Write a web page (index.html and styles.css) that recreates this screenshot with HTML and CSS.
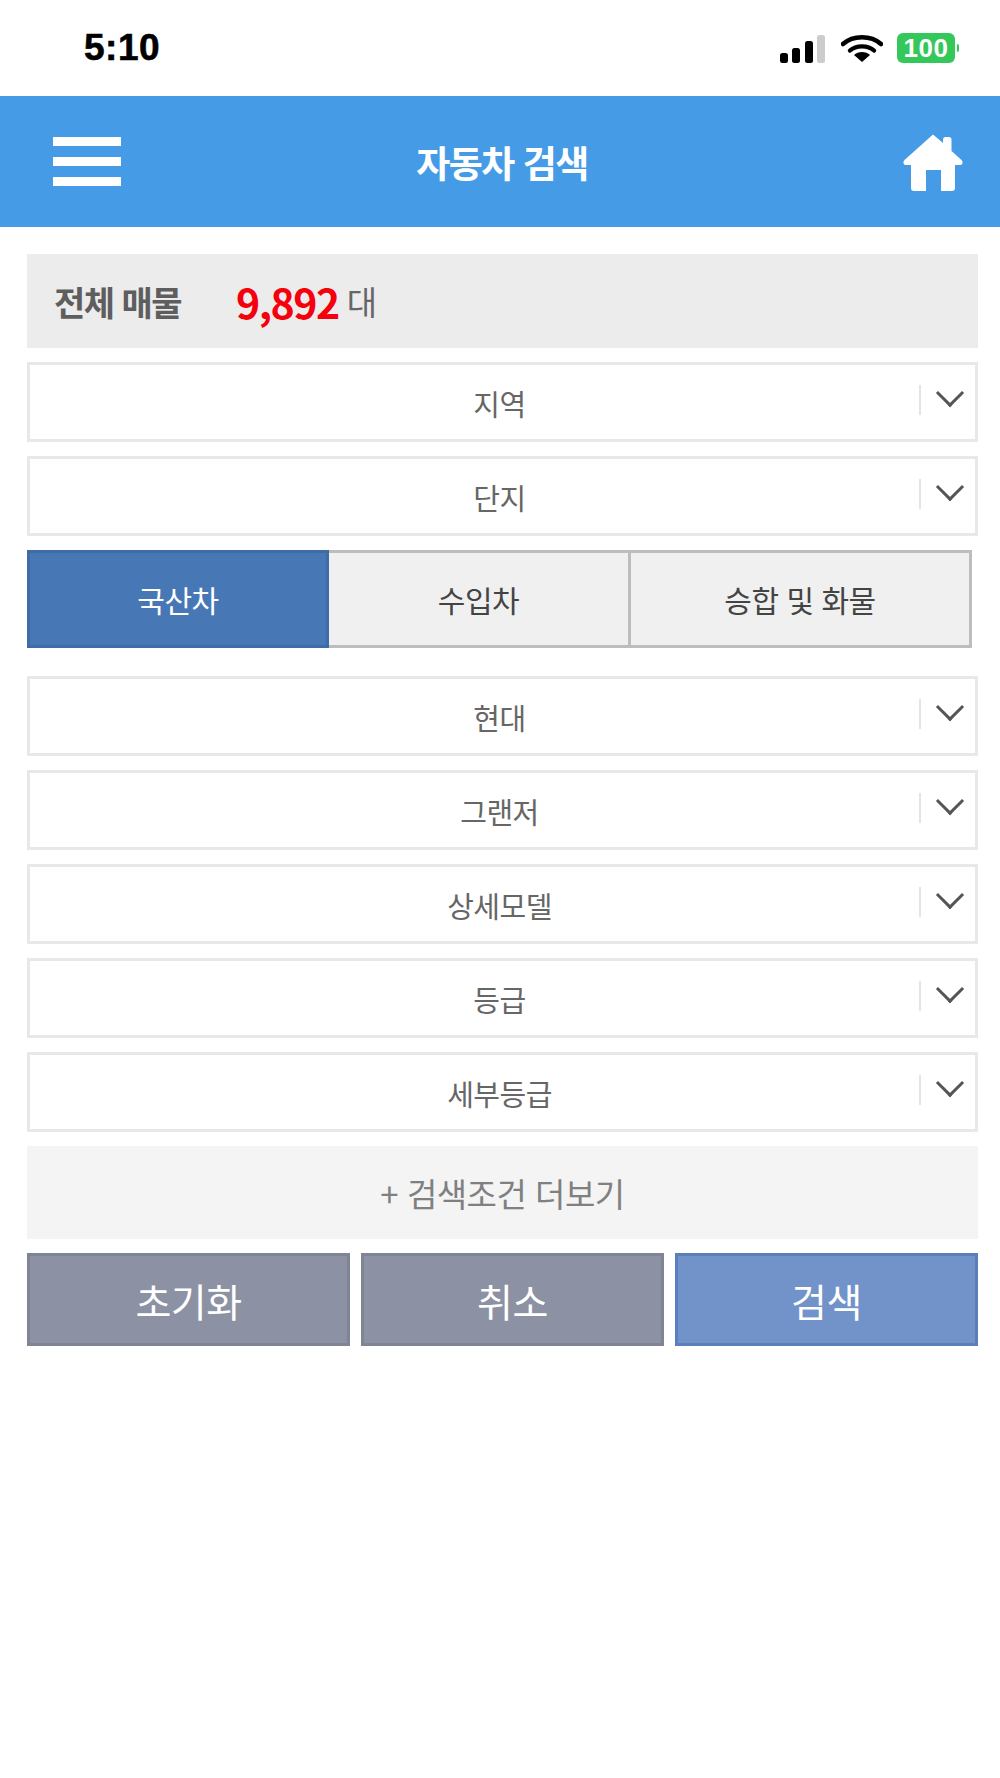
FILE: index.html
```html
<!DOCTYPE html>
<html lang="ko">
<head>
  <meta charset="UTF-8" />
  <meta name="viewport" content="width=device-width, initial-scale=1.0" />
  <title>자동차 검색</title>
  <link rel="stylesheet" href="styles.css">
</head>
<body>
  <!-- status bar -->
  <div class="status-bar">
    <span class="clock">5:10</span>
    <div class="status-icons">
      <svg class="signal" width="45" height="28" viewBox="0 0 45 28">
        <rect x="0" y="18" width="8" height="10" rx="2.5" fill="#000"/>
        <rect x="12" y="13" width="8" height="15" rx="2.5" fill="#000"/>
        <rect x="25" y="6" width="8" height="22" rx="2.5" fill="#000"/>
        <rect x="37" y="0" width="8" height="28" rx="2.5" fill="#ccc"/>
      </svg>
      <svg class="wifi" width="42" height="28" viewBox="0 0 42 28">
        <path d="M2 10C12 1 30 1 40 10" fill="none" stroke="#000" stroke-width="4.6" stroke-linecap="round"/>
        <path d="M9 16.500C15 11 27 11 33 16.500" fill="none" stroke="#000" stroke-width="4.4" stroke-linecap="round"/>
        <path d="M13 21C17 17 25 17 29 21L21 28Z" fill="#000"/>
      </svg>
      <div class="battery">
        <span class="battery-level">100</span>
        <span class="battery-tip"></span>
      </div>
    </div>
  </div>

  <!-- header -->
  <header class="top-bar">
    <div class="menu-icon"><span></span><span></span><span></span></div>
    <h1>자동차 검색</h1>
    <svg class="home-icon" width="60" height="60" viewBox="0 0 60 60">
      <path d="M30 1.500L40 10V6.500C40 5 41 4 42.500 4H46C47.500 4 48.500 5 48.500 6.500V18L58.500 27C60.500 29 59.500 32 57 32H52V55C52 57 51 58 49 58H38V37H23V58H11C9 58 8 57 8 55V32H3C0.500 32-0.500 29 1.500 27L30 1.500Z" fill="#fff"/>
    </svg>
  </header>

  <main class="search-form">
    <div class="summary">
      <span class="summary-label">전체 매물</span>
      <span class="summary-count">9,892</span>
      <span class="summary-unit">대</span>
    </div>

    <div class="select-box"><span>지역</span><i class="caret"></i></div>
    <div class="select-box"><span>단지</span><i class="caret"></i></div>

    <div class="tabs">
      <div class="tab active">국산차</div>
      <div class="tab">수입차</div>
      <div class="tab last">승합 및 화물</div>
    </div>

    <div class="select-box"><span>현대</span><i class="caret"></i></div>
    <div class="select-box"><span>그랜저</span><i class="caret"></i></div>
    <div class="select-box"><span>상세모델</span><i class="caret"></i></div>
    <div class="select-box"><span>등급</span><i class="caret"></i></div>
    <div class="select-box"><span>세부등급</span><i class="caret"></i></div>

    <div class="more">+ 검색조건 더보기</div>

    <div class="actions">
      <button class="btn grey first">초기화</button>
      <button class="btn grey">취소</button>
      <button class="btn blue">검색</button>
    </div>
  </main>
</body>
</html>
```

FILE: styles.css
```css
body{margin:0;background:#fff;font-family:"Noto Sans CJK KR","Noto Sans",sans-serif;color:#555;}

/* status bar */
.status-bar{height:96px;display:flex;justify-content:space-between;align-items:center;
  padding:0 41px 0 84px;box-sizing:border-box;}
.clock{font-family:"Liberation Sans",sans-serif;font-weight:700;font-size:37px;color:#000;
  letter-spacing:.5px;-webkit-text-stroke:.6px #000;}
.status-icons{display:flex;align-items:center;}
.signal{margin-right:16px;margin-top:2px;}
.wifi{margin-right:14px;}
.battery{display:flex;align-items:center;}
.battery-level{width:58px;height:30px;background:#34c759;border-radius:6px;color:#fff;
  font:700 26px/30px "Liberation Sans",sans-serif;text-align:center;letter-spacing:.5px;}
.battery-tip{width:2px;height:8px;background:#34c759;margin-left:2px;border-radius:0 2px 2px 0;}

/* header */
.top-bar{height:131px;background:#459be6;display:flex;align-items:center;justify-content:space-between;
  padding:0 0 0 53px;position:relative;}
.top-bar h1{position:absolute;left:0;right:0;margin:0;padding-right:0;text-align:center;color:#fff;
  font-size:37px;font-weight:700;line-height:50px;letter-spacing:-1.5px;left:4px;}
.menu-icon{width:68px;display:flex;flex-direction:column;gap:11px;}
.menu-icon span{height:9px;background:#fff;display:block;}
.home-icon{margin-right:37px;margin-top:2px;}

/* form */
.search-form{padding:27px 22px 0 27px;display:flex;flex-direction:column;}
.summary{height:94px;background:#ececec;display:flex;align-items:center;padding-left:27px;
  margin-bottom:14px;}
.summary-label{font-size:34px;font-weight:700;color:#5e5e5e;letter-spacing:-1.5px;width:182px;}
.summary-count{font-size:41px;font-weight:700;color:#f5000c;letter-spacing:-1.5px;margin-right:8px;}
.summary-unit{font-size:33px;color:#666;}

.select-box{height:80px;border:3px solid #e8e8e8;box-sizing:border-box;margin-bottom:14px;
  display:flex;align-items:center;justify-content:center;position:relative;background:#fff;}
.select-box span{font-size:29px;color:#666;letter-spacing:-.5px;position:relative;left:-3px;top:1px;}
.caret{position:absolute;right:0;top:20px;width:54px;height:30px;border-left:2px solid #e4e4e4;}
.caret::after{content:"";position:absolute;left:19px;top:-2px;width:17px;height:17px;
  border-right:3px solid #555;border-bottom:3px solid #555;transform:rotate(45deg);}

.tabs{display:flex;height:98px;margin-right:6px;margin-bottom:28px;}
.tab{flex:302px 0 0;box-sizing:border-box;background:#f0f0f0;border:3px solid #bdbdbd;border-left-width:0;
  display:flex;align-items:center;justify-content:center;font-size:30px;color:#444;letter-spacing:-.5px;}
.tab.last{flex:1;}
.tab.active{background:#4778b5;border:3px solid #3f6ca6;color:#fff;}

.more{height:93px;background:#f4f4f4;margin-bottom:14px;display:flex;align-items:center;justify-content:center;
  font-size:33px;color:#808080;letter-spacing:-.5px;}

.actions{display:flex;gap:11px;}
.btn{height:93px;flex:303px 0 0;box-sizing:border-box;border:3px solid #808595;background:#8c92a3;color:#fff;
  font-family:inherit;font-size:39px;padding:0;letter-spacing:-.5px;}
.btn.first{flex-basis:323px;}
.btn.blue{background:#7292ca;border-color:#5a7fbd;}
```
